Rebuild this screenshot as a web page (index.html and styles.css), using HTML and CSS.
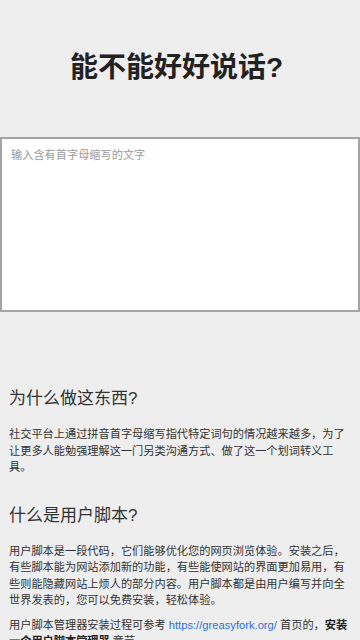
FILE: index.html
```html
<!DOCTYPE html>
<html lang="zh-CN">
<head>
<meta charset="utf-8">
<meta name="viewport" content="width=device-width, initial-scale=1">
<title>能不能好好说话？</title>
<link rel="stylesheet" href="styles.css">
</head>
<body>
<header class="header">
  <h1 class="title">能不能好好说话?</h1>
</header>
<textarea class="input" placeholder="输入含有首字母缩写的文字"></textarea>
<main class="content">
  <section class="section">
    <h2 class="section-title">为什么做这东西?</h2>
    <p class="text">社交平台上通过拼音首字母缩写指代特定词句的情况越来越多，为了让更多人能勉强理解这一门另类沟通方式、做了这一个划词转义工具。</p>
  </section>
  <section class="section">
    <h2 class="section-title">什么是用户脚本?</h2>
    <p class="text">用户脚本是一段代码，它们能够优化您的网页浏览体验。安装之后，有些脚本能为网站添加新的功能，有些能使网站的界面更加易用，有些则能隐藏网站上烦人的部分内容。用户脚本都是由用户编写并向全世界发表的，您可以免费安装，轻松体验。</p>
    <p class="text">用户脚本管理器安装过程可参考 <a class="link" href="#">https://greasyfork.org/</a> 首页的，<strong class="strong">安装一个用户脚本管理器</strong> 章节。</p>
  </section>
</main>
</body>
</html>
```
FILE: styles.css
```css
html, body {
  margin: 0;
  padding: 0;
}
body {
  background: #eeeeee;
  color: #333333;
  font-family: "Liberation Sans", "Noto Sans CJK SC", sans-serif;
}
.header {
  padding: 52px 7px 53px 0;
}
.title {
  margin: 0;
  text-align: center;
  font-size: 28px;
  line-height: 32px;
  font-weight: bold;
  color: #222222;
}
.input {
  display: block;
  box-sizing: border-box;
  width: 100%;
  height: 175px;
  margin: 0;
  padding: 8px 9px;
  border: 2px solid #a3a3a3;
  border-radius: 0;
  background: #ffffff;
  font-family: "Liberation Sans", "Noto Sans CJK SC", sans-serif;
  font-size: 11.2px;
  line-height: 16px;
  color: #333333;
  resize: none;
  outline: none;
}
.input::placeholder {
  color: #9a9a9a;
}
.content {
  padding: 75px 9px 20px;
}
.section + .section {
  margin-top: 28px;
}
.section-title {
  margin: 0 0 15px;
  font-size: 17px;
  line-height: 24px;
  font-weight: normal;
  color: #333333;
}
.text {
  margin: 0;
  font-size: 11.2px;
  line-height: 16.5px;
  color: #333333;
}
.text + .text {
  margin-top: 8px;
}
.link {
  color: #2f6fd0;
  text-decoration: none;
}
.strong {
  font-weight: bold;
  color: #222222;
}
```
